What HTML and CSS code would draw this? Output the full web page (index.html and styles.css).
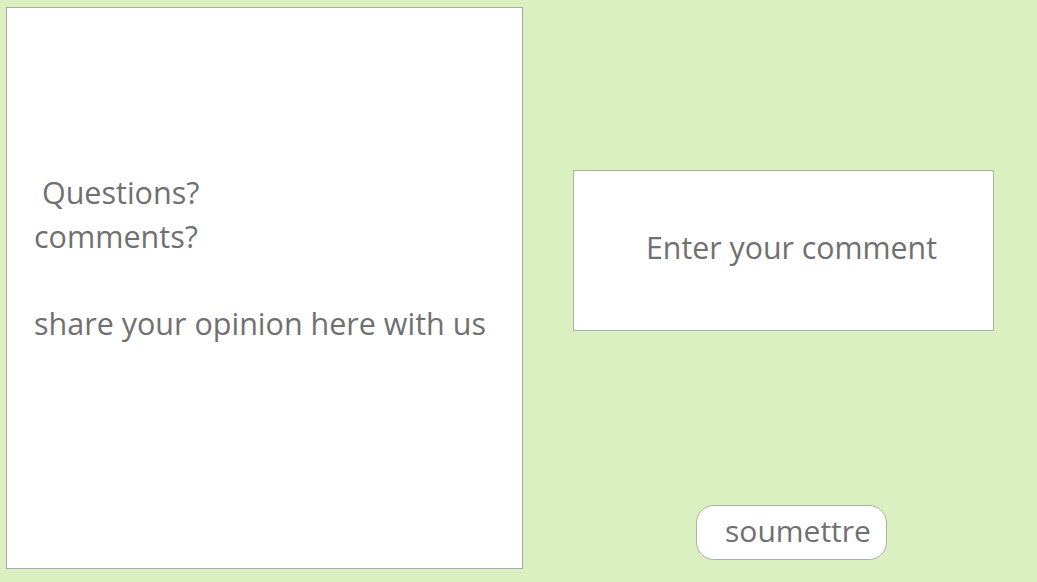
FILE: index.html
```html
<!DOCTYPE html>
<html>
<head>
<meta charset="utf-8">
<link rel="stylesheet" href="styles.css">
</head>
<body>
<div class="page">
  <section class="intro">
    <p class="intro-text">&nbsp;Questions?<br>comments?<br><br>share your opinion here with us</p>
  </section>
  <section class="form">
    <div class="comment-box">Enter your comment</div>
    <button class="submit">soumettre</button>
  </section>
</div>
</body>
</html>
```
FILE: styles.css
```css
html, body {
  margin: 0;
  padding: 0;
  background: #dbf0c0;
  font-family: "Open Sans", "Noto Sans", sans-serif;
  color: #707070;
}
.page {
  display: flex;
  padding: 7px 0 0 6px;
  height: 582px;
  box-sizing: border-box;
}
.intro {
  width: 517px;
  height: 562px;
  box-sizing: border-box;
  background: #fff;
  border: 1px solid #a9a9a9;
  padding: 163px 0 0 27px;
}
.intro-text {
  margin: 0;
  font-size: 30.5px;
  line-height: 43.5px;
  white-space: nowrap;
}
.form {
  display: flex;
  flex-direction: column;
  padding-left: 50px;
}
.comment-box {
  margin-top: 163px;
  width: 421px;
  height: 161px;
  box-sizing: border-box;
  background: #fff;
  border: 1px solid #a9b3a2;
  display: flex;
  align-items: center;
  justify-content: center;
  font-size: 30.3px;
  padding: 0 0 6px 16px;
}
.submit {
  margin: 174px 0 0 123px;
  width: 191px;
  height: 55px;
  box-sizing: border-box;
  background: #fff;
  border: 1px solid #a9b3a2;
  border-radius: 18px;
  font-family: inherit;
  font-size: 30px;
  color: #707070;
  padding: 0 0 5px 13px;
}
```
